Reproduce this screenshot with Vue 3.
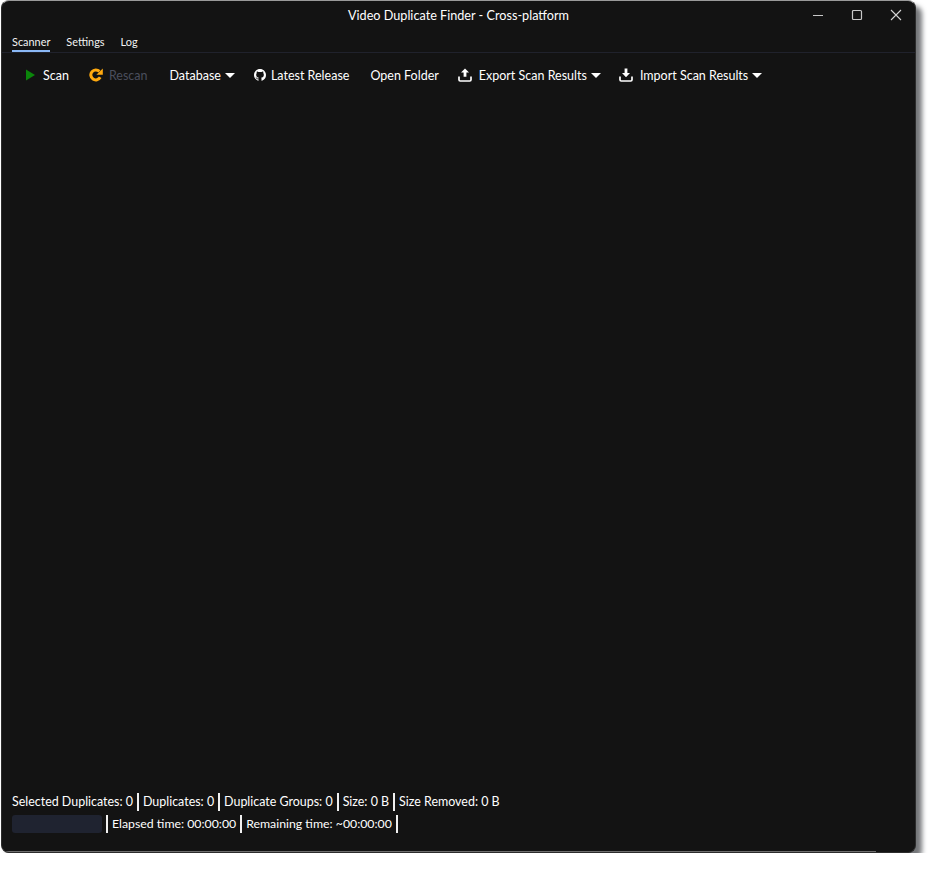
<script setup>
const tabs = ["Scanner", "Settings", "Log"];
const statsTop = [
  "Selected Duplicates: 0",
  "Duplicates: 0",
  "Duplicate Groups: 0",
  "Size: 0 B",
  "Size Removed: 0 B"
];
const statsBottom = ["Elapsed time: 00:00:00", "Remaining time: ~00:00:00"];
</script>

<template>
  <div class="window">
    <header class="titlebar">
      <span class="title">Video Duplicate Finder - Cross-platform</span>
      <div class="controls">
        <svg class="control" viewBox="0 0 12 12" width="12" height="12">
          <path d="M1 6.500h10" stroke="#c8c8c8" stroke-width="1.200" fill="none" />
        </svg>
        <svg class="control" viewBox="0 0 12 12" width="12" height="12">
          <rect x="1.500" y="1.500" width="9" height="9" rx="1" stroke="#c8c8c8" stroke-width="1.200" fill="none" />
        </svg>
        <svg class="control" viewBox="0 0 12 12" width="12" height="12">
          <path d="M1 1l10 10M11 1L1 11" stroke="#d4d4d4" stroke-width="1.100" fill="none" />
        </svg>
      </div>
    </header>

    <nav class="tabs">
      <span v-for="(tab, i) in tabs" :key="tab" class="tab" :class="{ active: i === 0 }">{{ tab }}</span>
    </nav>

    <div class="toolbar">
      <button class="tool scan">
        <svg viewBox="0 0 9 12" width="9" height="12"><path d="M0 .5L9 6 0 11.500z" fill="#0b860b" /></svg>
        Scan
      </button>
      <button class="tool rescan" disabled>
        <svg viewBox="0 0 14 14" width="14" height="14">
          <path d="M11.200 9.300A5 5 0 1 1 10.400 3.400" stroke="#ffa90f" stroke-width="3" fill="none" />
          <path d="M13.800 .4v6.400h-6.400z" fill="#ffa90f" />
        </svg>
        Rescan
      </button>
      <button class="tool database">
        Database
        <span class="caret"></span>
      </button>
      <button class="tool release">
        <svg viewBox="0 0 16 16" width="12" height="12">
          <path
            fill="#fff"
            d="M8 0C3.58 0 0 3.58 0 8c0 3.54 2.29 6.53 5.47 7.59.4.07.55-.17.55-.38 0-.19-.01-.82-.01-1.49-2.01.37-2.53-.49-2.69-.94-.09-.23-.48-.94-.82-1.13-.28-.15-.68-.52-.01-.53.63-.01 1.08.58 1.23.82.72 1.21 1.87.87 2.33.66.07-.52.28-.87.51-1.07-1.78-.2-3.64-.89-3.64-3.95 0-.87.31-1.59.82-2.15-.08-.2-.36-1.02.08-2.12 0 0 .67-.21 2.2.82.64-.18 1.32-.27 2-.27.68 0 1.36.09 2 .27 1.53-1.04 2.2-.82 2.2-.82.44 1.1.16 1.92.08 2.12.51.56.82 1.27.82 2.15 0 3.07-1.87 3.75-3.65 3.95.29.25.54.73.54 1.48 0 1.07-.01 1.93-.01 2.2 0 .21.15.46.55.38A8.013 8.013 0 0016 8c0-4.42-3.58-8-8-8z"
          />
        </svg>
        Latest Release
      </button>
      <button class="tool folder">Open Folder</button>
      <button class="tool export">
        <svg viewBox="0 0 14 14" width="14" height="14">
          <path d="M7 .5l4 4H8.400v4.200H5.600V4.500H3z" fill="#fff" />
          <path d="M1 8.500v3.300a1.200 1.200 0 0 0 1.200 1.200h9.600a1.200 1.200 0 0 0 1.200-1.200V8.500" stroke="#fff" stroke-width="1.700" fill="none" />
        </svg>
        Export Scan Results
        <span class="caret"></span>
      </button>
      <button class="tool import">
        <svg viewBox="0 0 14 14" width="14" height="14">
          <path d="M5.600 .5h2.800v4.500H11L7 9.200 3 5h2.600z" fill="#fff" />
          <path d="M1 8.500v3.300a1.200 1.200 0 0 0 1.200 1.200h9.600a1.200 1.200 0 0 0 1.200-1.200V8.500" stroke="#fff" stroke-width="1.700" fill="none" />
        </svg>
        Import Scan Results
        <span class="caret"></span>
      </button>
    </div>

    <main class="content"></main>

    <footer class="status">
      <div class="status-row">
        <span v-for="stat in statsTop" :key="stat" class="stat">{{ stat }}</span>
      </div>
      <div class="status-row timing">
        <div class="progress"></div>
        <span class="sep"></span>
        <span v-for="stat in statsBottom" :key="stat" class="stat">{{ stat }}</span>
      </div>
    </footer>
    <div class="edge"></div>
  </div>
</template>

<style>
html,
body {
  margin: 0;
  background: #fff;
}
</style>

<style scoped>
.window {
  box-sizing: border-box;
  width: 915px;
  height: 853px;
  margin: 0 0 0 1px;
  display: flex;
  flex-direction: column;
  background: #131313;
  border: 1px solid #2c2c2c;
  border-top-color: #9a9a9a;
  border-radius: 8px;
  box-shadow: 6px 6px 5px #75777a;
  color: #fff;
  font-family: Lato, "Open Sans", sans-serif;
  font-size: 12.5px;
  overflow: hidden;
}

.titlebar {
  height: 29px;
  flex: none;
  display: flex;
  align-items: center;
  justify-content: center;
  position: relative;
}

.title {
  margin-bottom: 1px;
  font-size: 12.650px;
}

.controls {
  position: absolute;
  right: 13px;
  top: 8px;
  display: flex;
  gap: 27px;
}

.control {
  display: block;
}

.tabs {
  flex: none;
  display: flex;
  gap: 16px;
  height: 22px;
  padding: 0 10px;
  border-bottom: 1px solid #20222c;
}

.tab {
  font-size: 10.900px;
  line-height: 23px;
  height: 20px;
  color: #f2f2f2;
}

.tab.active {
  border-bottom: 2px solid #8ab8f5;
}

.toolbar {
  flex: none;
  display: flex;
  align-items: center;
  height: 44px;
  padding: 0 0 0 24px;
}

.tool {
  display: flex;
  align-items: center;
  gap: 7px;
  padding: 0;
  margin-right: 19px;
  border: 0;
  background: none;
  color: #fff;
  font: inherit;
  white-space: nowrap;
}

.tool:disabled {
  color: #4a4e5c;
}

.scan {
  gap: 8px;
  margin-right: 20px;
}

.rescan {
  gap: 6px;
  margin-right: 22px;
}

.release {
  gap: 5px;
}

.folder {
  margin-left: 2px;
}

.export {
  margin-right: 18px;
}

.caret {
  width: 0;
  height: 0;
  margin-left: -3px;
  border-left: 5px solid transparent;
  border-right: 5px solid transparent;
  border-top: 5px solid #fff;
}

.content {
  flex: 1;
}

.status {
  flex: none;
  display: flex;
  flex-direction: column;
  gap: 3px;
  padding: 0 0 18px 10px;
}

.status-row {
  display: flex;
  align-items: center;
  height: 19px;
  font-size: 12.450px;
}

.status-row.timing {
  font-size: 12.300px;
}

.stat {
  padding-right: 4px;
  margin-right: 4px;
  line-height: 18px;
  border-right: 2px solid #f0f0f0;
}

.status-row:first-child .stat:last-child {
  border-right: 0;
}

.progress {
  width: 90px;
  height: 18px;
  margin-right: 4px;
  border-radius: 3px;
  background: #1f2330;
}

.sep {
  width: 2px;
  height: 18px;
  margin-right: 4px;
  background: #f0f0f0;
}

.edge {
  flex: none;
  width: 874px;
  height: 1px;
  background: #6e6e6e;
}
</style>
